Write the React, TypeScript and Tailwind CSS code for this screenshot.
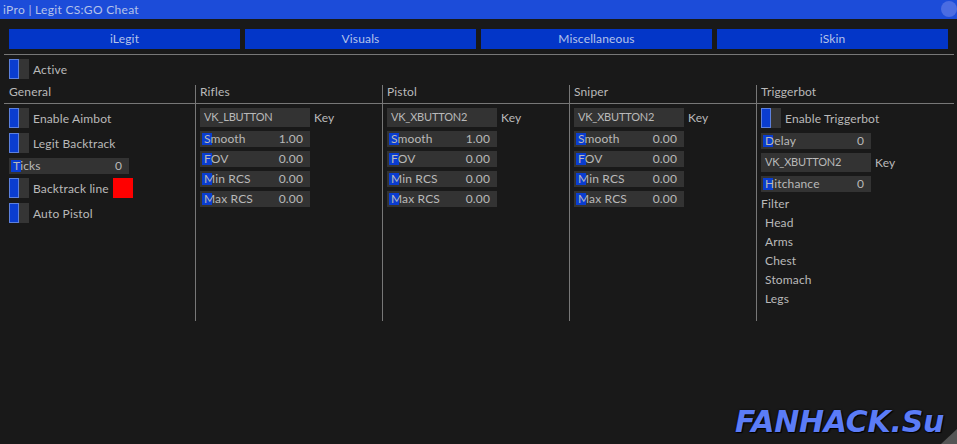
import React from "react";

const font = { fontFamily: '"Lato", "Liberation Sans", sans-serif' };

const Toggle = ({ label, children }: { label: string; children?: React.ReactNode }) => (
  <div className="flex items-center h-5">
    <div className="w-5 h-5 bg-[#353535] shrink-0">
      <div className="w-2.5 h-5 bg-[#0a3dd0] border border-[#5d80dc]" />
    </div>
    <span className="ml-1 pt-px whitespace-nowrap">{label}</span>
    {children}
  </div>
);

const Slider = ({ label, value, w = "w-[110px]" }: { label: string; value: string; w?: string }) => (
  <div className={`relative h-4 bg-[#333333] flex items-center justify-between pl-1 pr-[7px] ${w}`}>
    <div className="absolute left-[2px] top-[2px] w-2.5 h-3 bg-[#0a3dd0]" />
    <span className="relative">{label}</span>
    <span className="relative">{value}</span>
  </div>
);

const KeyBox = ({ name }: { name: string }) => (
  <div className="flex items-center h-[19px]">
    <div className="w-[110px] h-[19px] bg-[#333333] pl-1 flex items-center text-[11px] tracking-[-0.2px]">{name}</div>
    <span className="ml-1">Key</span>
  </div>
);

const WeaponColumn = ({ keyName, smooth }: { keyName: string; smooth: string }) => (
  <div className="w-[187px] border-l border-[#777777] pl-1 pt-[4px] flex flex-col gap-1">
    <KeyBox name={keyName} />
    <Slider label="Smooth" value={smooth} />
    <Slider label="FOV" value="0.00" />
    <Slider label="Min RCS" value="0.00" />
    <Slider label="Max RCS" value="0.00" />
  </div>
);

const tabs = ["iLegit", "Visuals", "Miscellaneous", "iSkin"];
const headers = [
  { name: "General", cls: "w-[191px] pl-[5px]" },
  { name: "Rifles", cls: "w-[187px] border-l border-[#777777] pl-1" },
  { name: "Pistol", cls: "w-[187px] border-l border-[#777777] pl-1" },
  { name: "Sniper", cls: "w-[187px] border-l border-[#777777] pl-1" },
  { name: "Triggerbot", cls: "flex-1 border-l border-[#777777] pl-1" },
];
const filters = ["Head", "Arms", "Chest", "Stomach", "Legs"];

export default function App() {
  return (
    <div
      className="relative w-[957px] h-[444px] overflow-hidden bg-[#191919] text-[#b9b9b9] text-[12px] tracking-[0.15px] flex flex-col"
      style={font}
    >
      {/* title bar */}
      <div className="h-[19px] shrink-0 bg-[#1c4cd9] flex items-center pl-[3px] text-[#b4c2ea] tracking-[0.3px]">
        iPro | Legit CS:GO Cheat
      </div>
      <div className="absolute right-0 top-[1px] w-4 h-4 rounded-full bg-[#4a6ce2]" />

      {/* tabs */}
      <div className="mt-[10px] px-[9px] flex gap-[5px]">
        {tabs.map((t) => (
          <div key={t} className="flex-1 h-5 bg-[#0336c8] flex items-center justify-center text-[#b4c2ea]">
            {t}
          </div>
        ))}
      </div>

      <div className="mt-[5px] mx-1 h-px w-[950px] bg-[#777777]" />

      <div className="mt-1 pl-[9px]">
        <Toggle label="Active" />
      </div>

      {/* column headers */}
      <div className="mt-[6px] mx-1 flex h-[19px] border-b border-[#777777] w-[950px]">
        {headers.map((h) => (
          <div key={h.name} className={`${h.cls} leading-[13px]`}>
            {h.name}
          </div>
        ))}
      </div>

      {/* columns */}
      <div className="mx-1 flex h-[217px] w-[950px]">
        <div className="w-[191px] pl-[5px] pt-[4px] flex flex-col gap-[5px]">
          <Toggle label="Enable Aimbot" />
          <Toggle label="Legit Backtrack" />
          <Slider label="Ticks" value="0" w="w-[120px]" />
          <div className="-mt-px">
            <Toggle label="Backtrack line">
              <div className="ml-1 w-5 h-5 bg-[#ff0000]" />
            </Toggle>
          </div>
          <Toggle label="Auto Pistol" />
        </div>
        <WeaponColumn keyName="VK_LBUTTON" smooth="1.00" />
        <WeaponColumn keyName="VK_XBUTTON2" smooth="1.00" />
        <WeaponColumn keyName="VK_XBUTTON2" smooth="0.00" />
        <div className="flex-1 border-l border-[#777777] pl-1 pt-[4px] flex flex-col">
          <Toggle label="Enable Triggerbot" />
          <div className="mt-[5px]">
            <Slider label="Delay" value="0" />
          </div>
          <div className="mt-1">
            <KeyBox name="VK_XBUTTON2" />
          </div>
          <div className="mt-1">
            <Slider label="Hitchance" value="0" />
          </div>
          <div className="mt-[4px] h-[16px] leading-[16px]">Filter</div>
          <div className="mt-[1px] flex flex-col pl-1">
            {filters.map((f) => (
              <div key={f} className="h-[19px] leading-[19px]">
                {f}
              </div>
            ))}
          </div>
        </div>
      </div>

      {/* watermark */}
      <div
        className="absolute right-[13px] bottom-[2px] text-[30px] leading-[40px] font-bold italic tracking-[-0.3px] text-[#5b7cf7] [text-shadow:0_0_2px_#000,1px_1px_1px_#000]"
        style={{ fontFamily: '"DejaVu Sans", sans-serif' }}
      >
        FANHACK.Su
      </div>

      {/* resize grip */}
      <svg className="absolute right-0 bottom-0" width="16" height="15" viewBox="0 0 16 15">
        <path d="M16 0V15H0Z" fill="#555555" />
      </svg>
    </div>
  );
}
